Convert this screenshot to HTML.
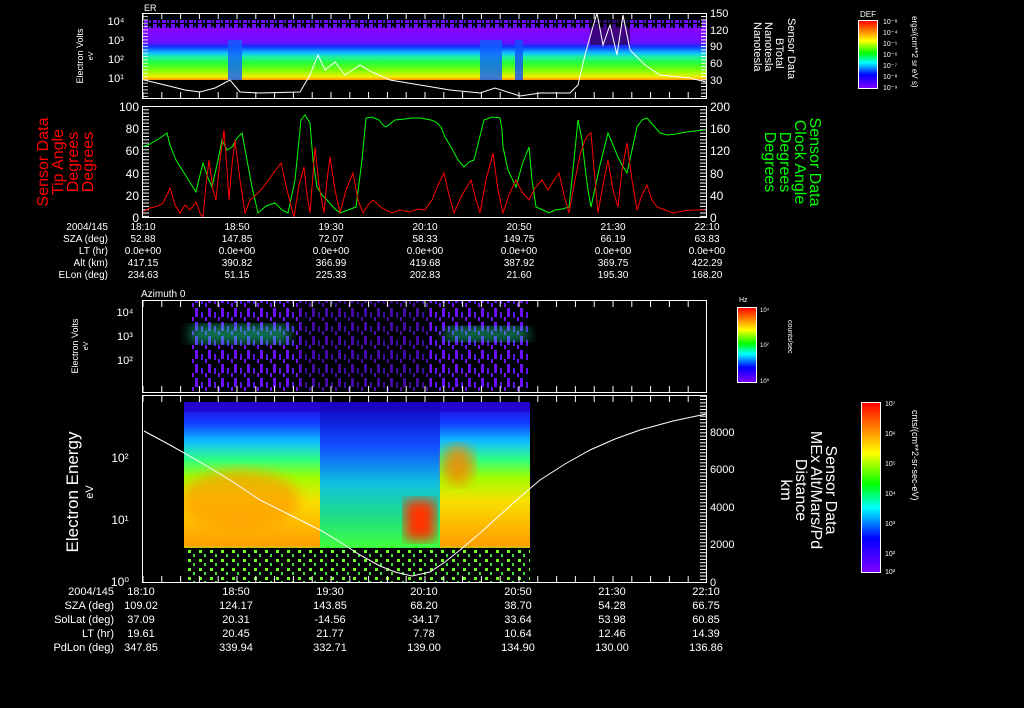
<!DOCTYPE html>
<html><head><meta charset="utf-8"><style>
html,body{margin:0;padding:0;background:#000;width:1024px;height:708px;overflow:hidden}
svg{display:block}
text{font-family:"Liberation Sans",sans-serif;fill:#fff}
.t{font-size:11px}
.s{font-size:9px}
</style></head><body>
<svg width="1024" height="708" viewBox="0 0 1024 708" xmlns="http://www.w3.org/2000/svg">
<defs>
<linearGradient id="cb" x1="0" y1="0" x2="0" y2="1">
<stop offset="0" stop-color="#ff0000"/><stop offset="0.17" stop-color="#ff9000"/><stop offset="0.3" stop-color="#ffff00"/><stop offset="0.48" stop-color="#00ff00"/><stop offset="0.62" stop-color="#00ffff"/><stop offset="0.8" stop-color="#0000ff"/><stop offset="1" stop-color="#8000ff"/></linearGradient>
<linearGradient id="p1" x1="0" y1="0" x2="0" y2="1">
<stop offset="0" stop-color="#8a00ff"/><stop offset="0.28" stop-color="#6a10ff"/><stop offset="0.36" stop-color="#1030ff"/><stop offset="0.48" stop-color="#10c0ff"/><stop offset="0.56" stop-color="#20f0a0"/><stop offset="0.66" stop-color="#20ff40"/><stop offset="0.82" stop-color="#80ff00"/><stop offset="0.94" stop-color="#f0f000"/><stop offset="1" stop-color="#ff9000"/></linearGradient>
<linearGradient id="p4" x1="0" y1="0" x2="0" y2="1">
<stop offset="0" stop-color="#3000e0"/><stop offset="0.12" stop-color="#1040ff"/><stop offset="0.22" stop-color="#10c0ff"/><stop offset="0.32" stop-color="#30ff80"/><stop offset="0.42" stop-color="#a0ff00"/><stop offset="0.55" stop-color="#f8e000"/><stop offset="0.72" stop-color="#ffb000"/><stop offset="0.8" stop-color="#ffa000"/><stop offset="0.82" stop-color="#60ff20"/><stop offset="1" stop-color="#000"/></linearGradient>
<linearGradient id="p4m" x1="0" y1="0" x2="0" y2="1">
<stop offset="0" stop-color="#1000c0"/><stop offset="0.25" stop-color="#1050ff"/><stop offset="0.45" stop-color="#10c0e0"/><stop offset="0.65" stop-color="#20e080"/><stop offset="0.8" stop-color="#40ff40"/><stop offset="1" stop-color="#000"/></linearGradient>
<pattern id="str" width="9" height="6" patternUnits="userSpaceOnUse"><rect x="0" y="0" width="4" height="5" fill="#6a10ff"/><rect x="5" y="2" width="2" height="3" fill="#5020d0"/></pattern>
<pattern id="str3" width="13" height="14" patternUnits="userSpaceOnUse"><rect x="0" y="0" width="3" height="9" fill="#6a10ff"/><rect x="6" y="4" width="2" height="6" fill="#5818e8"/><rect x="10" y="9" width="2" height="4" fill="#7010ff"/></pattern>
<pattern id="nz" width="11" height="9" patternUnits="userSpaceOnUse"><rect x="1" y="1" width="3" height="3" fill="#70ff20"/><rect x="6" y="5" width="2" height="3" fill="#40e040"/></pattern>
<pattern id="vt" width="18.8" height="10" x="142.5" patternUnits="userSpaceOnUse"><rect x="0" y="0" width="1" height="10" fill="#fff"/></pattern>
<pattern id="ht" width="10" height="3.33" y="106" patternUnits="userSpaceOnUse"><rect x="0" y="0" width="10" height="1" fill="#fff"/></pattern>
<filter id="bl"><feGaussianBlur stdDeviation="6"/></filter>
<clipPath id="c4"><rect x="184" y="402" width="346" height="180"/></clipPath>
</defs>

<!-- Panel 1 -->
<text x="144" y="11" class="s">ER</text>
<rect x="143" y="28" width="563" height="52" fill="url(#p1)"/>
<rect x="143" y="20" width="563" height="8" fill="url(#str)"/>
<rect x="228" y="40" width="14" height="40" fill="#1060ff" opacity=".8"/>
<rect x="480" y="40" width="22" height="40" fill="#1060ff" opacity=".8"/>
<rect x="515" y="40" width="8" height="40" fill="#1050ff" opacity=".8"/>
<rect x="590" y="20" width="40" height="25" fill="#000" opacity=".5"/>
<polyline fill="none" stroke="#fff" stroke-width="1" points="144,80 165,85 185,90 200,92 215,88 230,80 240,92 260,93 300,92 310,75 318,55 325,70 335,62 345,75 360,65 372,72 390,80 420,85 450,90 480,93 495,88 520,96 540,93 570,93 578,85 585,55 592,30 597,13 603,45 610,25 617,55 623,15 630,50 645,65 660,75 690,78 706,82"/>
<rect x="142.5" y="14" width="564" height="5" fill="url(#vt)"/>
<rect x="142.5" y="92" width="564" height="6" fill="url(#vt)"/>
<rect x="701" y="14" width="5" height="84" fill="url(#ht)"/>
<rect x="143" y="14" width="5" height="84" fill="url(#ht)" opacity=".8"/>
<rect x="142.5" y="13.5" width="564" height="85" fill="none" stroke="#fff"/>
<text x="116" y="25" class="t" text-anchor="middle">10⁴</text>
<text x="116" y="44" class="t" text-anchor="middle">10³</text>
<text x="116" y="63" class="t" text-anchor="middle">10²</text>
<text x="116" y="82" class="t" text-anchor="middle">10¹</text>
<text x="710" y="17" class="t">150</text><text x="710" y="34" class="t">120</text><text x="710" y="50" class="t">90</text><text x="710" y="67" class="t">60</text><text x="710" y="84" class="t">30</text>
<text transform="translate(83,56) rotate(-90)" class="s" text-anchor="middle">Electron Volts</text>
<text transform="translate(93,56) rotate(-90)" class="s" text-anchor="middle" style="font-size:7px">eV</text>
<g class="t" style="font-size:11px">
<text transform="translate(788,18) rotate(90)">Sensor Data</text>
<text transform="translate(776,38) rotate(90)">BTotal</text>
<text transform="translate(765,22) rotate(90)">Nanotesla</text>
<text transform="translate(754,22) rotate(90)">Nanotesla</text>
</g>
<text x="860" y="17" class="s" style="font-size:8px">DEF</text>
<rect x="858.5" y="20.5" width="19" height="68" fill="url(#cb)" stroke="#fff"/>
<g style="font-size:7px"><text x="883" y="24">10⁻⁸</text><text x="883" y="35">10⁻⁴</text><text x="883" y="46">10⁻⁵</text><text x="883" y="57">10⁻⁶</text><text x="883" y="68">10⁻⁷</text><text x="883" y="79">10⁻⁸</text><text x="883" y="90">10⁻⁹</text></g>
<text transform="translate(912,16) rotate(90)" style="font-size:8px">ergs/(cm**2 sr eV s)</text>

<!-- Panel 2 -->
<rect x="143" y="106" width="6" height="111" fill="url(#ht)"/>
<rect x="700" y="106" width="6" height="111" fill="url(#ht)"/>
<polyline fill="none" stroke="#00ff00" stroke-width="1" points="142,147 150,144 160,138 167,133 170,145 176,160 186,176 196,192 200,175 203,163 208,178 212,187 218,160 222,140 227,150 232,147 237,138 242,133 247,160 252,187 255,200 258,213 266,206 275,203 282,210 288,213 295,180 301,120 305,115 310,123 313,160 317,187 322,195 327,200 334,208 340,213 348,210 356,207 362,160 366,118 372,117 379,120 383,125 386,127 395,120 405,119 412,118 420,118 431,120 436,122 441,127 445,137 451,147 458,160 464,167 469,162 474,160 479,140 484,120 492,117 500,118 502,130 503,147 508,170 516,187 522,165 529,147 532,180 536,207 543,210 549,213 555,210 562,209 569,207 574,160 578,120 582,140 585,167 588,190 591,207 600,165 608,133 613,145 618,157 622,165 627,173 632,150 637,127 642,120 647,118 654,126 660,133 667,135 676,134 686,132 695,131 705,130"/>
<polyline fill="none" stroke="#ff0000" stroke-width="1" points="142,212 150,208 158,206 163,203 167,195 170,188 175,205 180,213 185,205 190,210 196,202 200,213 203,217 206,185 209,160 213,190 216,200 220,160 224,130 227,170 229,200 232,165 235,140 240,180 245,213 250,200 258,193 265,185 272,175 281,163 287,190 294,217 299,185 304,167 307,195 310,213 313,175 315,147 319,185 324,213 327,180 330,157 335,190 340,213 346,190 353,173 358,200 363,213 368,205 373,200 382,208 392,213 400,210 410,212 418,209 425,210 432,200 438,185 444,173 449,195 454,213 462,195 471,180 476,200 480,213 486,180 493,153 498,190 503,213 509,195 516,180 522,192 529,200 535,188 542,180 548,190 554,180 559,173 564,195 569,213 575,180 580,155 585,140 588,135 591,133 595,180 598,213 603,185 608,160 613,190 618,207 622,170 627,143 632,180 637,210 642,195 647,185 652,200 657,207 665,210 673,213 683,211 693,210 705,210"/>
<rect x="142.5" y="106.5" width="564" height="111" fill="none" stroke="#fff"/>
<g class="t" style="font-size:12px" text-anchor="end">
<text x="139" y="111">100</text><text x="139" y="133">80</text><text x="139" y="155">60</text><text x="139" y="178">40</text><text x="139" y="200">20</text><text x="139" y="222">0</text></g>
<g class="t" style="font-size:12px">
<text x="710" y="111">200</text><text x="710" y="133">160</text><text x="710" y="155">120</text><text x="710" y="178">80</text><text x="710" y="200">40</text><text x="710" y="222">0</text></g>
<g style="font-size:16px">
<text transform="translate(48,162) rotate(-90)" text-anchor="middle" style="fill:#f00">Sensor Data</text>
<text transform="translate(63,162) rotate(-90)" text-anchor="middle" style="fill:#f00">Tip Angle</text>
<text transform="translate(78,162) rotate(-90)" text-anchor="middle" style="fill:#f00">Degrees</text>
<text transform="translate(93,162) rotate(-90)" text-anchor="middle" style="fill:#f00">Degrees</text>
<text transform="translate(810,162) rotate(90)" text-anchor="middle" style="fill:#0f0">Sensor Data</text>
<text transform="translate(795,162) rotate(90)" text-anchor="middle" style="fill:#0f0">Clock Angle</text>
<text transform="translate(780,162) rotate(90)" text-anchor="middle" style="fill:#0f0">Degrees</text>
<text transform="translate(765,162) rotate(90)" text-anchor="middle" style="fill:#0f0">Degrees</text>
</g>
<g class="s" style="font-size:10px">
<text x="108" y="230" text-anchor="end">2004/145</text><text x="108" y="242" text-anchor="end">SZA (deg)</text><text x="108" y="254" text-anchor="end">LT (hr)</text><text x="108" y="266" text-anchor="end">Alt (km)</text><text x="108" y="278" text-anchor="end">ELon (deg)</text>
<g text-anchor="middle">
<text x="143" y="230">18:10</text><text x="237" y="230">18:50</text><text x="331" y="230">19:30</text><text x="425" y="230">20:10</text><text x="519" y="230">20:50</text><text x="613" y="230">21:30</text><text x="707" y="230">22:10</text>
<text x="143" y="242">52.88</text><text x="237" y="242">147.85</text><text x="331" y="242">72.07</text><text x="425" y="242">58.33</text><text x="519" y="242">149.75</text><text x="613" y="242">66.19</text><text x="707" y="242">63.83</text>
<text x="143" y="254">0.0e+00</text><text x="237" y="254">0.0e+00</text><text x="331" y="254">0.0e+00</text><text x="425" y="254">0.0e+00</text><text x="519" y="254">0.0e+00</text><text x="613" y="254">0.0e+00</text><text x="707" y="254">0.0e+00</text>
<text x="143" y="266">417.15</text><text x="237" y="266">390.82</text><text x="331" y="266">366.99</text><text x="425" y="266">419.68</text><text x="519" y="266">387.92</text><text x="613" y="266">369.75</text><text x="707" y="266">422.29</text>
<text x="143" y="278">234.63</text><text x="237" y="278">51.15</text><text x="331" y="278">225.33</text><text x="425" y="278">202.83</text><text x="519" y="278">21.60</text><text x="613" y="278">195.30</text><text x="707" y="278">168.20</text>
</g></g>

<!-- Panel 3 -->
<text x="141" y="297" class="s" style="font-size:10px">Azimuth 0</text>
<rect x="190" y="301" width="338" height="90" fill="url(#str3)"/>
<rect x="300" y="301" width="130" height="90" fill="#000" opacity=".35"/>
<rect x="190" y="325" width="100" height="18" fill="#20e0a0" opacity=".55" filter="url(#bl)"/>
<rect x="445" y="327" width="83" height="14" fill="#20e0a0" opacity=".55" filter="url(#bl)"/>
<rect x="142.5" y="301" width="564" height="6" fill="url(#vt)"/>
<rect x="142.5" y="386" width="564" height="6" fill="url(#vt)"/>
<rect x="142.5" y="300.5" width="564" height="92" fill="none" stroke="#fff"/>
<g class="t"><text x="125" y="316" text-anchor="middle">10⁴</text><text x="125" y="340" text-anchor="middle">10³</text><text x="125" y="364" text-anchor="middle">10²</text></g>
<text transform="translate(78,346) rotate(-90)" class="s" text-anchor="middle">Electron Volts</text>
<text transform="translate(88,346) rotate(-90)" class="s" text-anchor="middle" style="font-size:7px">eV</text>
<text x="739" y="302" style="font-size:7px">Hz</text>
<rect x="737.5" y="307.5" width="19" height="75" fill="url(#cb)" stroke="#fff"/>
<g style="font-size:6px"><text x="760" y="312">10⁴</text><text x="760" y="347">10²</text><text x="760" y="383">10⁰</text></g>
<text transform="translate(788,320) rotate(90)" style="font-size:7px">counts/sec</text>

<!-- Panel 4 -->
<g clip-path="url(#c4)">
<rect x="184" y="402" width="346" height="180" fill="url(#p4)"/>
<rect x="320" y="402" width="120" height="180" fill="url(#p4m)"/>
<ellipse cx="240" cy="500" rx="60" ry="30" fill="#ff9a00" opacity=".7" filter="url(#bl)"/>
<rect x="405" y="500" width="30" height="40" fill="#ff3000" filter="url(#bl)"/>
<ellipse cx="458" cy="465" rx="16" ry="20" fill="#ff8000" opacity=".8" filter="url(#bl)"/>
<rect x="184" y="402" width="346" height="10" fill="#2000c0" opacity=".6"/>
<rect x="184" y="548" width="346" height="34" fill="#000"/>
<rect x="184" y="548" width="346" height="34" fill="url(#nz)"/>
</g>
<polyline fill="none" stroke="#fff" stroke-width="1" points="144,431 170,445 200,462 230,480 260,500 290,515 320,530 340,542 360,555 380,566 395,572 412,576 430,572 445,562 460,550 480,533 500,515 520,497 540,480 565,464 590,450 615,439 640,430 673,421 706,414"/>
<rect x="142.5" y="396" width="564" height="6" fill="url(#vt)"/>
<rect x="142.5" y="576" width="564" height="6" fill="url(#vt)"/>
<rect x="700" y="396" width="6" height="186" fill="url(#ht)"/>
<rect x="142.5" y="395.5" width="564" height="187" fill="none" stroke="#fff"/>
<g class="t" style="font-size:12px"><text x="120" y="462" text-anchor="middle">10²</text><text x="120" y="524" text-anchor="middle">10¹</text><text x="120" y="586" text-anchor="middle">10⁰</text></g>
<g class="t" style="font-size:11px"><text x="710" y="436">8000</text><text x="710" y="473">6000</text><text x="710" y="511">4000</text><text x="710" y="548">2000</text><text x="710" y="586">0</text></g>
<text transform="translate(78,492) rotate(-90)" text-anchor="middle" style="font-size:17px">Electron Energy</text>
<text transform="translate(93,492) rotate(-90)" text-anchor="middle" style="font-size:11px">eV</text>
<g style="font-size:16px">
<text transform="translate(826,490) rotate(90)" text-anchor="middle">Sensor Data</text>
<text transform="translate(811,490) rotate(90)" text-anchor="middle">MEx Alt/Mars/Pd</text>
<text transform="translate(796,490) rotate(90)" text-anchor="middle">Distance</text>
<text transform="translate(781,490) rotate(90)" text-anchor="middle">km</text>
</g>
<rect x="861.5" y="402.5" width="19" height="170" fill="url(#cb)" stroke="#fff"/>
<g style="font-size:7px"><text x="885" y="406">10⁷</text><text x="885" y="436">10⁶</text><text x="885" y="466">10⁵</text><text x="885" y="496">10⁴</text><text x="885" y="526">10³</text><text x="885" y="556">10²</text><text x="885" y="574">10²</text></g>
<text transform="translate(912,410) rotate(90)" style="font-size:9px">cnts/(cm**2-sr-sec-eV)</text>
<g class="s" style="font-size:11px">
<text x="114" y="595" text-anchor="end">2004/145</text><text x="114" y="609" text-anchor="end">SZA (deg)</text><text x="114" y="623" text-anchor="end">SolLat (deg)</text><text x="114" y="637" text-anchor="end">LT (hr)</text><text x="114" y="651" text-anchor="end">PdLon (deg)</text>
<g text-anchor="middle">
<text x="141" y="595">18:10</text><text x="236" y="595">18:50</text><text x="330" y="595">19:30</text><text x="424" y="595">20:10</text><text x="518" y="595">20:50</text><text x="612" y="595">21:30</text><text x="706" y="595">22:10</text>
<text x="141" y="609">109.02</text><text x="236" y="609">124.17</text><text x="330" y="609">143.85</text><text x="424" y="609">68.20</text><text x="518" y="609">38.70</text><text x="612" y="609">54.28</text><text x="706" y="609">66.75</text>
<text x="141" y="623">37.09</text><text x="236" y="623">20.31</text><text x="330" y="623">-14.56</text><text x="424" y="623">-34.17</text><text x="518" y="623">33.64</text><text x="612" y="623">53.98</text><text x="706" y="623">60.85</text>
<text x="141" y="637">19.61</text><text x="236" y="637">20.45</text><text x="330" y="637">21.77</text><text x="424" y="637">7.78</text><text x="518" y="637">10.64</text><text x="612" y="637">12.46</text><text x="706" y="637">14.39</text>
<text x="141" y="651">347.85</text><text x="236" y="651">339.94</text><text x="330" y="651">332.71</text><text x="424" y="651">139.00</text><text x="518" y="651">134.90</text><text x="612" y="651">130.00</text><text x="706" y="651">136.86</text>
</g></g>
</svg>
</body></html>
